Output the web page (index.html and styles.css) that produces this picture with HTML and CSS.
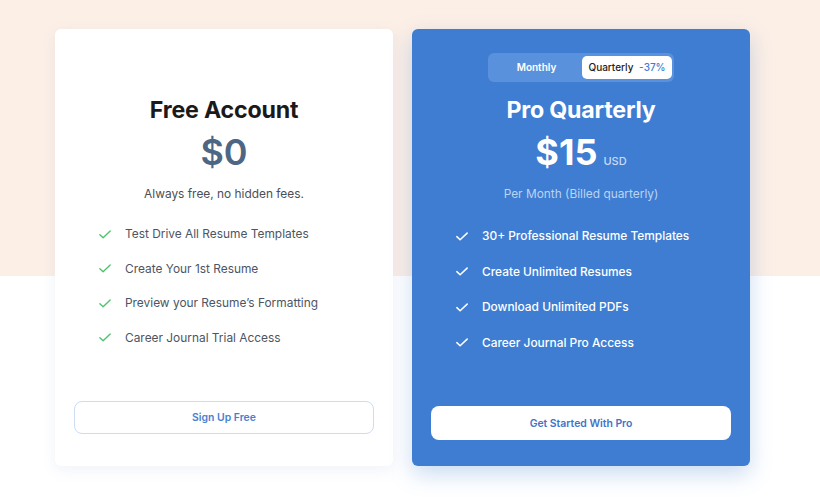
FILE: index.html
```html
<!DOCTYPE html>
<html>
<head>
<meta charset="utf-8">
<link rel="stylesheet" href="styles.css">
</head>
<body>
<div class="page">
  <div class="cards">
    <div class="card card-free">
      <div class="toggle-spacer"></div>
      <h2 class="title">Free Account</h2>
      <div class="price"><span class="amount">$0</span></div>
      <p class="note">Always free, no hidden fees.</p>
      <ul class="features">
        <li><svg class="check" viewBox="0 0 14 10"><path d="M1 5.2l3.8 3.6L13 1"/></svg>Test Drive All Resume Templates</li>
        <li><svg class="check" viewBox="0 0 14 10"><path d="M1 5.2l3.8 3.6L13 1"/></svg>Create Your 1st Resume</li>
        <li><svg class="check" viewBox="0 0 14 10"><path d="M1 5.2l3.8 3.6L13 1"/></svg>Preview your Resume’s Formatting</li>
        <li><svg class="check" viewBox="0 0 14 10"><path d="M1 5.2l3.8 3.6L13 1"/></svg>Career Journal Trial Access</li>
      </ul>
      <button class="btn btn-outline">Sign Up Free</button>
    </div>
    <div class="card card-pro">
      <div class="toggle">
        <span class="toggle-opt">Monthly</span>
        <span class="toggle-opt active">Quarterly <span class="discount">-37%</span></span>
      </div>
      <h2 class="title">Pro Quarterly</h2>
      <div class="price"><span class="amount">$15</span><span class="currency">USD</span></div>
      <p class="note">Per Month (Billed quarterly)</p>
      <ul class="features">
        <li><svg class="check" viewBox="0 0 14 10"><path d="M1 5.2l3.8 3.6L13 1"/></svg>30+ Professional Resume Templates</li>
        <li><svg class="check" viewBox="0 0 14 10"><path d="M1 5.2l3.8 3.6L13 1"/></svg>Create Unlimited Resumes</li>
        <li><svg class="check" viewBox="0 0 14 10"><path d="M1 5.2l3.8 3.6L13 1"/></svg>Download Unlimited PDFs</li>
        <li><svg class="check" viewBox="0 0 14 10"><path d="M1 5.2l3.8 3.6L13 1"/></svg>Career Journal Pro Access</li>
      </ul>
      <button class="btn btn-solid">Get Started With Pro</button>
    </div>
  </div>
</div>
</body>
</html>
```

FILE: styles.css
```css
* { box-sizing: border-box; }
html, body { margin: 0; padding: 0; }
body {
  font-family: Inter, "Noto Sans", sans-serif;
  background: linear-gradient(to bottom, #fcefe6 0, #fcefe6 276px, #ffffff 276px);
  height: 497px;
  overflow: hidden;
}
.page {
  padding: 29px 0 0 55px;
}
.cards {
  display: flex;
  gap: 19px;
}
.card {
  width: 338px;
  height: 437px;
  border-radius: 6px;
  display: flex;
  flex-direction: column;
  align-items: center;
  padding: 24px 19px 0;
}
.card-free {
  background: #fff;
  box-shadow: 0 4px 14px rgba(120, 150, 200, 0.12);
  padding-bottom: 32px;
}
.card-pro {
  background: #3e7dd1;
  color: #fff;
  box-shadow: 0 8px 22px rgba(62, 125, 209, 0.28);
  padding-bottom: 26px;
}
.toggle-spacer { height: 29px; }
.toggle {
  height: 29px;
  width: 186px;
  border-radius: 6px;
  background: #5a91dc;
  display: flex;
  align-items: center;
  padding: 3px 2px 3px 3px;
}
.toggle-opt {
  flex: 1;
  text-align: center;
  font-size: 10px;
  font-weight: 600;
  color: #fff;
  line-height: 23px;
  border-radius: 5px;
}
.toggle-opt.active {
  flex: 0 0 90px;
  background: #fff;
  color: #222;
  font-weight: 500;
}
.discount { color: #3e7dd1; font-weight: 500; margin-left: 3px; }
.title {
  margin: 13px 0 0;
  font-size: 23.2px;
  line-height: 30px;
  font-weight: 700;
  color: #1a1a1a;
  letter-spacing: -0.2px;
}
.card-pro .title { color: #fff; }
.price {
  margin-top: 5px;
  height: 44px;
  display: flex;
  align-items: baseline;
}
.amount {
  font-size: 36px;
  line-height: 44px;
  font-weight: 600;
  color: #4d6684;
}
.card-pro .amount { color: #fff; font-weight: 700; }
.currency {
  font-size: 11px;
  font-weight: 500;
  color: #c9dbf5;
  margin-left: 6px;
}
.note {
  margin: 10px 0 0;
  font-size: 11.9px;
  line-height: 20px;
  color: #4b4f56;
}
.card-pro .note { color: #bcd3f3; }
.features {
  list-style: none;
  margin: 20px 0 0;
  padding: 0 0 0 25px;
  align-self: stretch;
  display: flex;
  flex-direction: column;
  gap: 14.5px;
}
.features li {
  display: flex;
  align-items: center;
  font-size: 11.9px;
  line-height: 20px;
  color: #4d5563;
}
.card-pro .features { margin-top: 22px; gap: 15.5px; }
.card-pro .features li { color: #fff; font-size: 11.9px; font-weight: 500; }
.check {
  width: 12px;
  height: 9px;
  margin-right: 14px;
  fill: none;
  stroke: #4cc46b;
  stroke-width: 1.6;
  stroke-linecap: round;
  stroke-linejoin: round;
  flex: none;
}
.card-pro .check { stroke: #fff; stroke-width: 1.8; }
.btn {
  margin-top: auto;
  align-self: stretch;
  font-family: inherit;
  font-size: 10.4px;
  font-weight: 600;
  color: #4a7fd0;
  border-radius: 8px;
  cursor: pointer;
}
.btn-outline {
  height: 33px;
  background: #fff;
  border: 1px solid #cbdcf3;
}
.btn-solid {
  height: 34px;
  background: #fff;
  border: none;
  color: #3f74c8;
}
```
